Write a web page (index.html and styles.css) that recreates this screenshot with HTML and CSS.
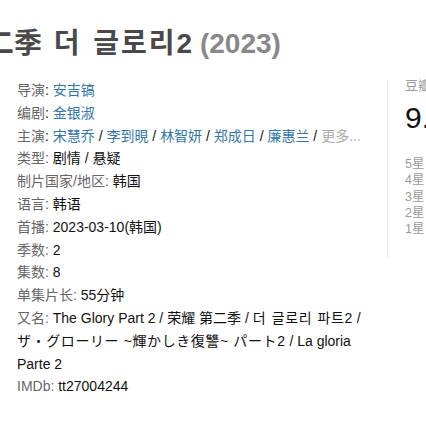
FILE: index.html
```html
<!DOCTYPE html>
<html lang="zh-CN">
<head>
<meta charset="utf-8">
<title>더 글로리2</title>
<link rel="stylesheet" href="styles.css">
</head>
<body>
<div class="page">
  <h1 class="title"><span class="name">二季 <span class="ko">더</span> <span class="ko">글로리</span>2</span> <span class="year">(2023)</span></h1>
  <div class="main">
    <div class="info">
      <div class="row"><span class="pl">导演</span>: <a class="lnk">安吉镐</a></div>
      <div class="row"><span class="pl">编剧</span>: <a class="lnk">金银淑</a></div>
      <div class="row"><span class="pl">主演</span>: <a class="lnk">宋慧乔</a> / <a class="lnk">李到晛</a> / <a class="lnk">林智妍</a> / <a class="lnk">郑成日</a> / <a class="lnk">廉惠兰</a> / <span class="more">更多...</span></div>
      <div class="row"><span class="pl">类型:</span> 剧情 / 悬疑</div>
      <div class="row"><span class="pl">制片国家/地区:</span> 韩国</div>
      <div class="row"><span class="pl">语言:</span> 韩语</div>
      <div class="row"><span class="pl">首播:</span> 2023-03-10(韩国)</div>
      <div class="row"><span class="pl">季数:</span> 2</div>
      <div class="row"><span class="pl">集数:</span> 8</div>
      <div class="row"><span class="pl">单集片长:</span> 55分钟</div>
      <div class="row"><span class="pl">又名:</span> The Glory Part 2 / 荣耀 第二季 / <span class="ko-inline">더 글로리 파트2</span> /<br><span class="ja">ザ・グローリー ~輝かしき復讐~ パート2</span> / La gloria<br>Parte 2</div>
      <div class="row"><span class="pl">IMDb:</span> tt27004244</div>
    </div>
    <div class="rating">
      <div class="rating-label">豆瓣评分</div>
      <div class="rating-num">9.4</div>
      <div class="stars">
        <div class="star-row">5星</div>
        <div class="star-row">4星</div>
        <div class="star-row">3星</div>
        <div class="star-row">2星</div>
        <div class="star-row">1星</div>
      </div>
    </div>
  </div>
</div>
</body>
</html>
```
FILE: styles.css
```css
html, body {
  margin: 0;
  padding: 0;
  background: #fff;
  overflow: hidden;
}
body {
  font-family: "Liberation Sans", Arial, "Noto Sans CJK SC", "Noto Sans CJK KR", sans-serif;
  color: #111;
}
.page {
  width: 426px;
  height: 426px;
  overflow: hidden;
  padding-left: 17px;
  box-sizing: border-box;
}
.title {
  margin: 0 0 0 -31px;
  padding-top: 26px;
  font-size: 28px;
  line-height: 36px;
  font-weight: bold;
  color: #494949;
  white-space: nowrap;
  font-family: "Liberation Sans", Arial, "Noto Sans CJK SC", "Noto Sans CJK KR", sans-serif;
}
.title .name {
  font-family: "Liberation Sans", "Noto Sans CJK KR", sans-serif;
  word-spacing: 4px;
}
.title .ko {
  letter-spacing: 2px;
}
.title .year {
  color: #888;
  word-spacing: 0;
}
.main {
  display: flex;
  margin-top: 17px;
}
.info {
  width: 355px;
  flex: none;
  font-size: 14px;
  line-height: 22.8px;
  margin-right: 15px;
}
.pl {
  color: #666;
}
.lnk {
  color: #37a;
  text-decoration: none;
}
.more {
  color: #aaa;
}
.ko-inline {
  font-family: "Liberation Sans", "Noto Sans CJK KR", sans-serif;
  letter-spacing: 0.6px;
  word-spacing: 1px;
}
.ja {
  font-family: "Liberation Sans", "Noto Sans CJK JP", sans-serif;
  letter-spacing: 0.6px;
}
.rating {
  flex: none;
  width: 200px;
  margin-top: 1px;
  align-self: flex-start;
  border-left: 1px solid #eaeaea;
  padding: 0 0 21px 17px;
  font-family: "Liberation Sans", Arial, "Noto Sans CJK SC", sans-serif;
}
.rating-label {
  font-size: 13px;
  line-height: 12px;
  color: #9b9b9b;
}
.rating-num {
  margin-top: 11px;
  font-size: 30px;
  line-height: 30px;
  color: #111;
}
.stars {
  margin-top: 23px;
}
.star-row {
  font-size: 12.5px;
  line-height: 16.25px;
  color: #9b9b9b;
}
```
